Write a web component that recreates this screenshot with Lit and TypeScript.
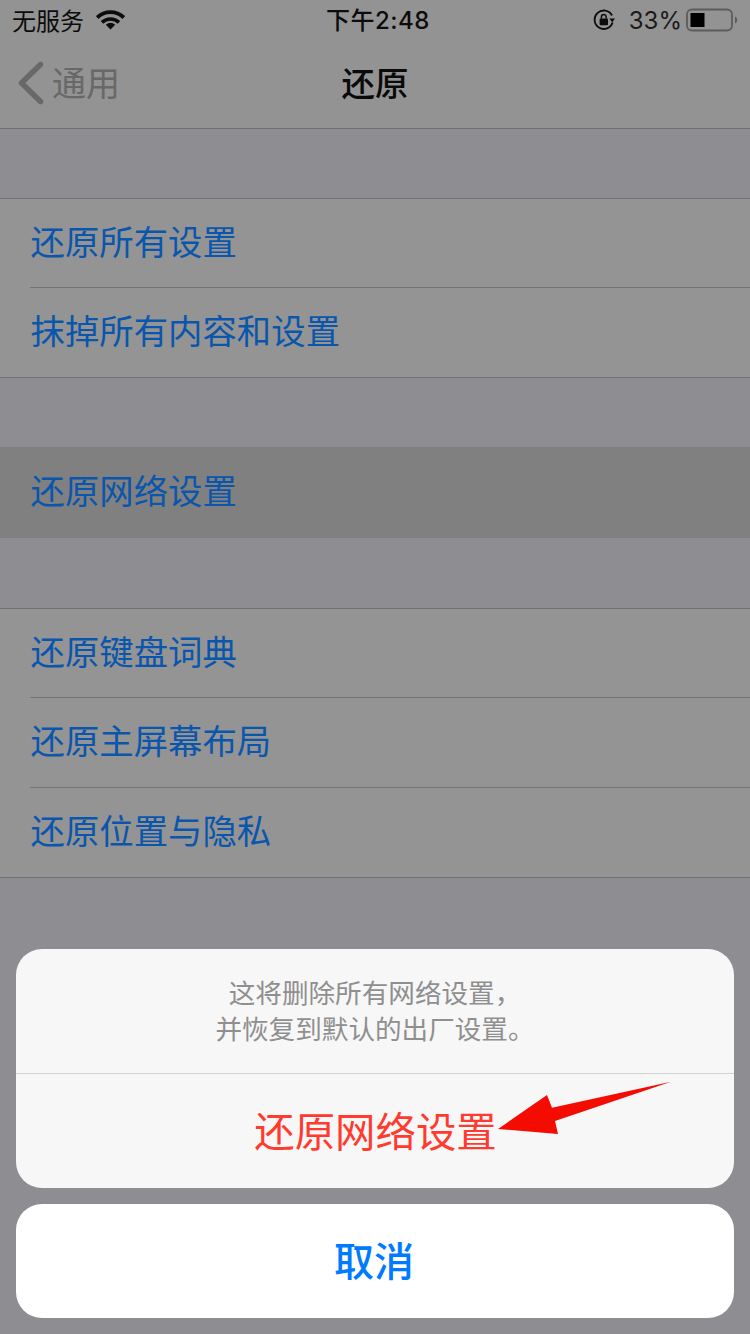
import { LitElement, html, css, svg } from "lit";
import { customElement } from "lit/decorators.js";

const groups = [
  [{ t: "还原所有设置" }, { t: "抹掉所有内容和设置" }],
  [{ t: "还原网络设置", active: true }],
  [{ t: "还原键盘词典" }, { t: "还原主屏幕布局" }, { t: "还原位置与隐私" }],
];

@customElement("app-root")
export class AppRoot extends LitElement {
  static styles = css`
    :host {
      display: block;
      position: relative;
      width: 750px;
      height: 1334px;
      overflow: hidden;
      background: #8d8d92;
      font-family: "Noto Sans CJK SC", "Liberation Sans", sans-serif;
    }
    .nav {
      height: 128px;
      background: #939393;
      border-bottom: 1px solid #6f6f74;
      position: relative;
    }
    .status {
      height: 40px;
      padding: 0 12px;
      display: flex;
      align-items: center;
      justify-content: space-between;
      color: #0c0c0c;
      font-size: 24px;
      position: relative;
    }
    .status-left, .status-right { display: flex; align-items: center; }
    .carrier { font-size: 24px; line-height: 40px; margin-right: 12px; }
    .time {
      position: absolute;
      left: 6px;
      right: 0;
      top: 1px;
      text-align: center;
      font-family: "Inter", "Noto Sans CJK SC", sans-serif;
      font-size: 24px;
      font-weight: 500;
      line-height: 40px;
      letter-spacing: 0.5px;
    }
    .pct {
      font-family: "Inter", "Liberation Sans", sans-serif;
      font-size: 24px;
      line-height: 40px;
      color: #1a1a1a;
      margin: 1px 4px 0 14px;
    }
    .bar {
      height: 88px;
      display: flex;
      align-items: center;
      justify-content: center;
      position: relative;
    }
    .back {
      position: absolute;
      left: 17px;
      top: 0;
      height: 88px;
      display: flex;
      align-items: center;
      color: #686868;
      font-size: 34px;
      gap: 8px;
    }
    .back svg { margin-bottom: 2px; }
    .back span { margin-bottom: 5px; }
    .title { font-size: 33.5px; font-weight: 500; color: #0a0a0a; line-height: 84px; padding-bottom: 4px; }
    .group {
      margin-top: 69px;
      background: #949494;
      border-top: 1px solid #707075;
      border-bottom: 1px solid #707075;
    }
    .group.active { background: #808080; border-color: #808080; }
    .group.active + .group { margin-top: 70px; }
    .row {
      height: 89px;
      padding-left: 30px;
      display: flex;
    }
    .row:not(:first-child):not(:last-child) { height: 90px; }
    .row .label {
      flex: 1;
      font-size: 34.4px;
      line-height: 83px;
      color: #0a56ac;
      border-bottom: 1px solid #747474;
      box-sizing: border-box;
      padding-left: 0.5px;
    }
    .row:last-child .label { border-bottom: none; }
    .sheet {
      position: absolute;
      left: 16px;
      right: 16px;
      top: 949px;
      display: flex;
      flex-direction: column;
      gap: 16px;
    }
    .card {
      background: #f7f7f8;
      border-radius: 26px;
      position: relative;
      overflow: hidden;
    }
    .msg {
      height: 125px;
      box-sizing: border-box;
      padding-top: 25px;
      text-align: center;
      font-size: 26.6px;
      line-height: 36px;
      color: #8f8f8f;
      border-bottom: 1px solid #d2d2d4;
    }
    .danger {
      height: 114px;
      text-align: center;
      font-size: 40.4px;
      line-height: 112px;
      color: #ff3b30;
      padding-left: 1px;
    }
    .cancel {
      background: #fff;
      height: 114px;
      text-align: center;
      font-size: 40px;
      font-weight: 500;
      line-height: 110px;
      color: #007aff;
      padding-right: 2px;
    }
    .arrow { position: absolute; left: 0; top: 0; pointer-events: none; }
  `;

  render() {
    return html`
      <div class="nav">
        <div class="status">
          <div class="status-left">
            <span class="carrier">无服务</span>
            <svg width="29" height="20" viewBox="0 0 29 20">
              <path d="M1.2 7.6C8.6 .4 20.4 .4 27.8 7.6" fill="none" stroke="#0c0c0c" stroke-width="3.8"/>
              <path d="M6 12.4C10.8 7.9 18.2 7.9 23 12.4" fill="none" stroke="#0c0c0c" stroke-width="3.6"/>
              <path d="M9.8 14.8C12.8 12.1 16.2 12.1 19.2 14.8L14.5 19.6Z" fill="#0c0c0c"/>
            </svg>
          </div>
          <div class="time">下午2:48</div>
          <div class="status-right">
            <svg width="22" height="22" viewBox="0 0 22 22">
              <path d="M19.6 13.5A9.2 9.2 0 1 1 19 6.5" fill="none" stroke="#0c0c0c" stroke-width="1.8"/>
              <path d="M16.4 9.4H22L19.2 13.4Z" fill="#0c0c0c"/>
              <rect x="6.6" y="9.6" width="8.4" height="6.6" rx="1" fill="#0c0c0c"/>
              <path d="M8.4 9.8V8A2.4 2.4 0 0 1 13.2 8V9.8" fill="none" stroke="#0c0c0c" stroke-width="1.5"/>
            </svg>
            <span class="pct">33%</span>
            <svg width="52" height="24" viewBox="0 0 52 24">
              <rect x="1" y="1.5" width="45" height="21" rx="5" fill="none" stroke="#5c5c5c" stroke-width="1.8"/>
              <rect x="4.5" y="5" width="14" height="14" fill="#000"/>
              <path d="M49 8.5C50.6 9 51.2 10.5 51.2 12S50.6 15 49 15.5Z" fill="#5c5c5c"/>
            </svg>
          </div>
        </div>
        <div class="bar">
          <div class="back">
            <svg width="27" height="44" viewBox="0 0 27 44">
              <path d="M23.5 3.5L4.5 22L23.5 40.5" fill="none" stroke="#686868" stroke-width="5.4" stroke-linecap="round" stroke-linejoin="round"/>
            </svg>
            <span>通用</span>
          </div>
          <div class="title">还原</div>
        </div>
      </div>
      ${groups.map(
        (g) => html`
          <div class="group ${g.some((r) => r.active) ? "active" : ""}">
            ${g.map(
              (r) => html`<div class="row"><div class="label">${r.t}</div></div>`
            )}
          </div>
        `
      )}
      <div class="sheet">
        <div class="card">
          <div class="msg">这将删除所有网络设置，<br />并恢复到默认的出厂设置。</div>
          <div class="danger">还原网络设置</div>
          <svg class="arrow" width="718" height="239" viewBox="0 0 718 239">
            ${svg`<path d="M482 180L531 146L536 158.7L655 132.7L539 172L542 185Z" fill="#f40c00"/>`}
          </svg>
        </div>
        <div class="card cancel">取消</div>
      </div>
    `;
  }
}
